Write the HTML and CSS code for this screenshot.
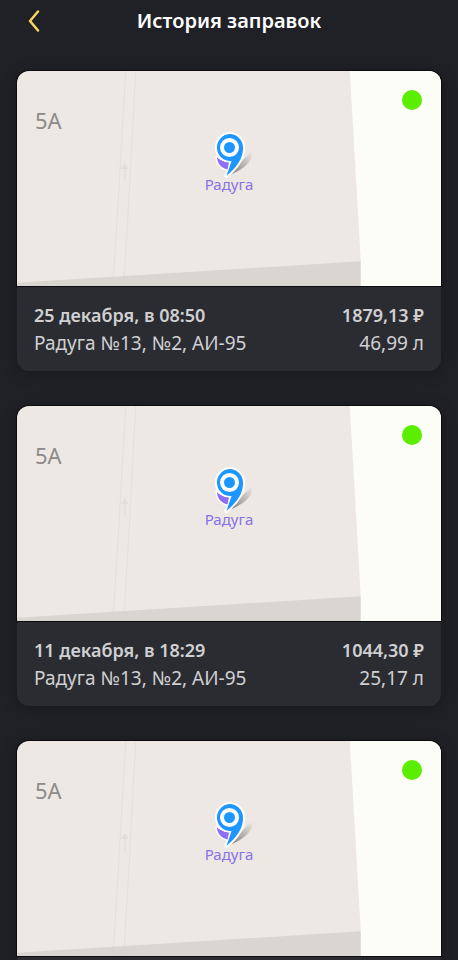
FILE: index.html
```html
<!DOCTYPE html>
<html lang="ru">
  <head>
    <meta charset="UTF-8" />
    <meta name="viewport" content="width=device-width, initial-scale=1.0" />
    <title>История заправок</title>
    <link rel="stylesheet" href="styles.css">
  </head>
  <body>
    <!-- shared map drawing and pin -->
    <svg class="sprite" aria-hidden="true">
      <defs>
        <linearGradient id="pin-shadow" x1="0" y1="1" x2="1" y2="0">
          <stop offset="0" stop-color="#77706c" />
          <stop offset="0.5" stop-color="#b3aca8" />
          <stop offset="1" stop-color="#ede8e4" />
        </linearGradient>
      </defs>
      <symbol id="map" viewBox="0 0 423 215" preserveAspectRatio="xMidYMid slice">
        <rect width="423" height="215" fill="#ede8e4" />
        <path d="M0 211.500 343 190V215H0z" fill="#d9d6d1" />
        <path d="M332 0 343 191V215H423V0z" fill="#fcfdf6" />
        <path d="M108.500 0 100.500 139 95.500 215M118.500 0 111 139 106.500 215" fill="none" stroke="#d5d2cc" stroke-opacity="0.400" />
        <path d="M107.500 92l4 6h-8zM107 98h1.500v12h-1.500z" fill="#e2dfdb" />
      </symbol>
      <symbol id="pin" viewBox="0 0 44 52">
        <path d="M14 45 38 21C42 25 36 37 14 45z" fill="url(#pin-shadow)" />
        <path d="M4 26C4 32 8 37 14.500 38.500L16 30z" fill="#8f6ff5" stroke="#fff" stroke-width="3" stroke-linejoin="round" />
        <path d="M16.500 3A13.500 13.500 0 1 0 18.500 30L13.500 45C24 36 30.500 27 30 16.500A13.500 13.500 0 0 0 16.500 3z" fill="#1e96ff" stroke="#fff" stroke-width="4" stroke-linejoin="round" />
        <path d="M4 26C4 32 8 37 14.500 38.500L16 31.500Q8 31.500 4 26z" fill="#8f6ff5" />
        <path d="M16.500 3A13.500 13.500 0 1 0 18.500 30L13.500 45C24 36 30.500 27 30 16.500A13.500 13.500 0 0 0 16.500 3z" fill="#1e96ff" />
        <circle cx="16.500" cy="16.500" r="7.500" fill="#1e96ff" stroke="#fff" stroke-width="4" />
      </symbol>
    </svg>

    <header class="header">
      <button class="back" type="button" aria-label="Назад">
        <svg width="12" height="22" viewBox="0 0 12 22">
          <path d="M10 1.500 2 11l8 9.500" fill="none" stroke="#fad45c" stroke-width="2.500" stroke-linecap="round" stroke-linejoin="round" />
        </svg>
      </button>
      <h1 class="title">История заправок</h1>
    </header>

    <main class="history">
      <article class="card">
        <div class="map">
          <svg class="map-image"><use href="#map" /></svg>
          <span class="house">5А</span>
          <svg class="pin"><use href="#pin" /></svg>
          <span class="station">Радуга</span>
          <span class="status"></span>
        </div>
        <div class="info">
          <div class="row row-main"><span>25 декабря, в 08:50</span><span>1879,13 ₽</span></div>
          <div class="row"><span>Радуга №13, №2, АИ-95</span><span>46,99 л</span></div>
        </div>
      </article>

      <article class="card">
        <div class="map">
          <svg class="map-image"><use href="#map" /></svg>
          <span class="house">5А</span>
          <svg class="pin"><use href="#pin" /></svg>
          <span class="station">Радуга</span>
          <span class="status"></span>
        </div>
        <div class="info">
          <div class="row row-main"><span>11 декабря, в 18:29</span><span>1044,30 ₽</span></div>
          <div class="row"><span>Радуга №13, №2, АИ-95</span><span>25,17 л</span></div>
        </div>
      </article>

      <article class="card">
        <div class="map">
          <svg class="map-image"><use href="#map" /></svg>
          <span class="house">5А</span>
          <svg class="pin"><use href="#pin" /></svg>
          <span class="station">Радуга</span>
          <span class="status"></span>
        </div>
        <div class="info"></div>
      </article>
    </main>
  </body>
</html>
```
FILE: styles.css
```css
* {
  box-sizing: border-box;
}
body {
  margin: 0;
  height: 100vh;
  display: flex;
  flex-direction: column;
  overflow: hidden;
  background: #202126;
  color: #d0d0d3;
  font-family: "Noto Sans", sans-serif;
}
.sprite {
  position: absolute;
  width: 0;
  height: 0;
}
.header {
  display: grid;
  grid-template-columns: 48px 1fr 48px;
  align-items: center;
  height: 41px;
  flex-shrink: 0;
}
.back {
  display: flex;
  padding: 0 0 0 28px;
  border: none;
  background: none;
  cursor: pointer;
}
.title {
  margin: 0;
  color: #fff;
  font-size: 20px;
  font-weight: 600;
  text-align: center;
}
.history {
  flex: 1;
  display: flex;
  flex-direction: column;
  gap: 35px;
  padding: 30px 17px;
  overflow-y: auto;
  scrollbar-width: none;
}
.card {
  flex-shrink: 0;
  border-radius: 12px;
  background: #2b2c31;
  box-shadow: 0 2px 16px rgba(0, 0, 0, 0.3);
}
.map {
  position: relative;
  height: 215px;
  border-radius: 12px 12px 0 0;
  box-shadow: 0 0 0 1px #0c0c0e;
}
.map-image {
  display: block;
  width: 100%;
  height: 100%;
  border-radius: 12px 12px 0 0;
}
.house {
  position: absolute;
  top: 34px;
  left: 18px;
  color: #8c8b89;
  font-size: 22px;
  line-height: 30px;
}
.pin {
  position: absolute;
  top: 60px;
  left: calc(50% - 16px);
  width: 44px;
  height: 52px;
}
.station {
  position: absolute;
  top: 103px;
  left: 0;
  width: 100%;
  color: #8672e8;
  font-size: 15px;
  line-height: 20px;
  text-align: center;
}
.status {
  position: absolute;
  top: 19px;
  right: 19px;
  width: 20px;
  height: 20px;
  border-radius: 50%;
  background: #5bee00;
}
.info {
  min-height: 85px;
  padding: 15px 17px 14px;
}
.row {
  display: flex;
  justify-content: space-between;
  font-size: 19px;
  line-height: 28px;
}
.row-main {
  font-size: 18px;
  font-weight: 600;
}
```
